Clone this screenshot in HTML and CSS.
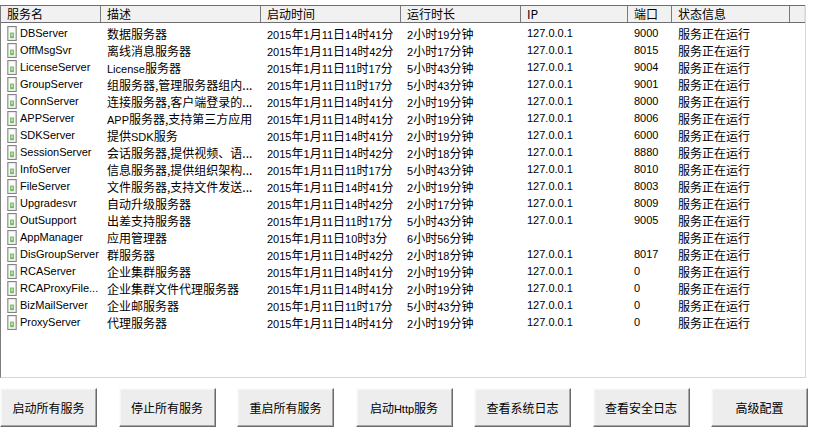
FILE: index.html
```html
<!DOCTYPE html>
<html lang="zh-CN">
<head>
<meta charset="utf-8">
<title>服务管理</title>
<link rel="stylesheet" href="styles.css">
</head>
<body>
<svg class="defs" width="0" height="0" aria-hidden="true">
  <symbol id="ico" viewBox="0 0 10 16">
    <rect x="0.5" y="0.5" width="9" height="15" fill="#e6e6e6" stroke="#7c7c7c"/>
    <rect x="2" y="2" width="6" height="12" fill="#fbfbfb"/>
    <rect x="3" y="7" width="4" height="6" fill="#6cb85a"/>
    <rect x="4" y="8" width="2" height="3" fill="#b9e3a8"/>
  </symbol>
</svg>
<div class="window">
  <div class="list">
    <div class="head">
      <div class="hcell">服务名</div>
      <div class="hcell">描述</div>
      <div class="hcell">启动时间</div>
      <div class="hcell">运行时长</div>
      <div class="hcell">IP</div>
      <div class="hcell">端口</div>
      <div class="hcell">状态信息</div>
      <div class="hcell filler"></div>
    </div>
    <div class="rows">
      <div class="row"><div class="cell name"><svg class="ico"><use href="#ico"/></svg><span class="n">DBServer</span></div><div class="cell">数据服务器</div><div class="cell"><span class="n">2015</span>年<span class="n">1</span>月<span class="n">11</span>日<span class="n">14</span>时<span class="n">41</span>分</div><div class="cell"><span class="n">2</span>小时<span class="n">19</span>分钟</div><div class="cell lat">127.0.0.1</div><div class="cell lat">9000</div><div class="cell">服务正在运行</div></div>
      <div class="row"><div class="cell name"><svg class="ico"><use href="#ico"/></svg><span class="n">OffMsgSvr</span></div><div class="cell">离线消息服务器</div><div class="cell"><span class="n">2015</span>年<span class="n">1</span>月<span class="n">11</span>日<span class="n">14</span>时<span class="n">42</span>分</div><div class="cell"><span class="n">2</span>小时<span class="n">17</span>分钟</div><div class="cell lat">127.0.0.1</div><div class="cell lat">8015</div><div class="cell">服务正在运行</div></div>
      <div class="row"><div class="cell name"><svg class="ico"><use href="#ico"/></svg><span class="n">LicenseServer</span></div><div class="cell"><span class="n">License</span>服务器</div><div class="cell"><span class="n">2015</span>年<span class="n">1</span>月<span class="n">11</span>日<span class="n">11</span>时<span class="n">17</span>分</div><div class="cell"><span class="n">5</span>小时<span class="n">43</span>分钟</div><div class="cell lat">127.0.0.1</div><div class="cell lat">9004</div><div class="cell">服务正在运行</div></div>
      <div class="row"><div class="cell name"><svg class="ico"><use href="#ico"/></svg><span class="n">GroupServer</span></div><div class="cell">组服务器,管理服务器组内...</div><div class="cell"><span class="n">2015</span>年<span class="n">1</span>月<span class="n">11</span>日<span class="n">11</span>时<span class="n">17</span>分</div><div class="cell"><span class="n">5</span>小时<span class="n">43</span>分钟</div><div class="cell lat">127.0.0.1</div><div class="cell lat">9001</div><div class="cell">服务正在运行</div></div>
      <div class="row"><div class="cell name"><svg class="ico"><use href="#ico"/></svg><span class="n">ConnServer</span></div><div class="cell">连接服务器,客户端登录的...</div><div class="cell"><span class="n">2015</span>年<span class="n">1</span>月<span class="n">11</span>日<span class="n">14</span>时<span class="n">41</span>分</div><div class="cell"><span class="n">2</span>小时<span class="n">19</span>分钟</div><div class="cell lat">127.0.0.1</div><div class="cell lat">8000</div><div class="cell">服务正在运行</div></div>
      <div class="row"><div class="cell name"><svg class="ico"><use href="#ico"/></svg><span class="n">APPServer</span></div><div class="cell"><span class="n">APP</span>服务器,支持第三方应用</div><div class="cell"><span class="n">2015</span>年<span class="n">1</span>月<span class="n">11</span>日<span class="n">14</span>时<span class="n">41</span>分</div><div class="cell"><span class="n">2</span>小时<span class="n">19</span>分钟</div><div class="cell lat">127.0.0.1</div><div class="cell lat">8006</div><div class="cell">服务正在运行</div></div>
      <div class="row"><div class="cell name"><svg class="ico"><use href="#ico"/></svg><span class="n">SDKServer</span></div><div class="cell">提供<span class="n">SDK</span>服务</div><div class="cell"><span class="n">2015</span>年<span class="n">1</span>月<span class="n">11</span>日<span class="n">14</span>时<span class="n">41</span>分</div><div class="cell"><span class="n">2</span>小时<span class="n">19</span>分钟</div><div class="cell lat">127.0.0.1</div><div class="cell lat">6000</div><div class="cell">服务正在运行</div></div>
      <div class="row"><div class="cell name"><svg class="ico"><use href="#ico"/></svg><span class="n">SessionServer</span></div><div class="cell">会话服务器,提供视频、语...</div><div class="cell"><span class="n">2015</span>年<span class="n">1</span>月<span class="n">11</span>日<span class="n">14</span>时<span class="n">42</span>分</div><div class="cell"><span class="n">2</span>小时<span class="n">18</span>分钟</div><div class="cell lat">127.0.0.1</div><div class="cell lat">8880</div><div class="cell">服务正在运行</div></div>
      <div class="row"><div class="cell name"><svg class="ico"><use href="#ico"/></svg><span class="n">InfoServer</span></div><div class="cell">信息服务器,提供组织架构...</div><div class="cell"><span class="n">2015</span>年<span class="n">1</span>月<span class="n">11</span>日<span class="n">11</span>时<span class="n">17</span>分</div><div class="cell"><span class="n">5</span>小时<span class="n">43</span>分钟</div><div class="cell lat">127.0.0.1</div><div class="cell lat">8010</div><div class="cell">服务正在运行</div></div>
      <div class="row"><div class="cell name"><svg class="ico"><use href="#ico"/></svg><span class="n">FileServer</span></div><div class="cell">文件服务器,支持文件发送...</div><div class="cell"><span class="n">2015</span>年<span class="n">1</span>月<span class="n">11</span>日<span class="n">14</span>时<span class="n">41</span>分</div><div class="cell"><span class="n">2</span>小时<span class="n">19</span>分钟</div><div class="cell lat">127.0.0.1</div><div class="cell lat">8003</div><div class="cell">服务正在运行</div></div>
      <div class="row"><div class="cell name"><svg class="ico"><use href="#ico"/></svg><span class="n">Upgradesvr</span></div><div class="cell">自动升级服务器</div><div class="cell"><span class="n">2015</span>年<span class="n">1</span>月<span class="n">11</span>日<span class="n">14</span>时<span class="n">42</span>分</div><div class="cell"><span class="n">2</span>小时<span class="n">17</span>分钟</div><div class="cell lat">127.0.0.1</div><div class="cell lat">8009</div><div class="cell">服务正在运行</div></div>
      <div class="row"><div class="cell name"><svg class="ico"><use href="#ico"/></svg><span class="n">OutSupport</span></div><div class="cell">出差支持服务器</div><div class="cell"><span class="n">2015</span>年<span class="n">1</span>月<span class="n">11</span>日<span class="n">11</span>时<span class="n">17</span>分</div><div class="cell"><span class="n">5</span>小时<span class="n">43</span>分钟</div><div class="cell lat">127.0.0.1</div><div class="cell lat">9005</div><div class="cell">服务正在运行</div></div>
      <div class="row"><div class="cell name"><svg class="ico"><use href="#ico"/></svg><span class="n">AppManager</span></div><div class="cell">应用管理器</div><div class="cell"><span class="n">2015</span>年<span class="n">1</span>月<span class="n">11</span>日<span class="n">10</span>时<span class="n">3</span>分</div><div class="cell"><span class="n">6</span>小时<span class="n">56</span>分钟</div><div class="cell lat"></div><div class="cell lat"></div><div class="cell">服务正在运行</div></div>
      <div class="row"><div class="cell name"><svg class="ico"><use href="#ico"/></svg><span class="n">DisGroupServer</span></div><div class="cell">群服务器</div><div class="cell"><span class="n">2015</span>年<span class="n">1</span>月<span class="n">11</span>日<span class="n">14</span>时<span class="n">42</span>分</div><div class="cell"><span class="n">2</span>小时<span class="n">18</span>分钟</div><div class="cell lat">127.0.0.1</div><div class="cell lat">8017</div><div class="cell">服务正在运行</div></div>
      <div class="row"><div class="cell name"><svg class="ico"><use href="#ico"/></svg><span class="n">RCAServer</span></div><div class="cell">企业集群服务器</div><div class="cell"><span class="n">2015</span>年<span class="n">1</span>月<span class="n">11</span>日<span class="n">14</span>时<span class="n">41</span>分</div><div class="cell"><span class="n">2</span>小时<span class="n">19</span>分钟</div><div class="cell lat">127.0.0.1</div><div class="cell lat">0</div><div class="cell">服务正在运行</div></div>
      <div class="row"><div class="cell name"><svg class="ico"><use href="#ico"/></svg><span class="n">RCAProxyFile...</span></div><div class="cell">企业集群文件代理服务器</div><div class="cell"><span class="n">2015</span>年<span class="n">1</span>月<span class="n">11</span>日<span class="n">14</span>时<span class="n">41</span>分</div><div class="cell"><span class="n">2</span>小时<span class="n">19</span>分钟</div><div class="cell lat">127.0.0.1</div><div class="cell lat">0</div><div class="cell">服务正在运行</div></div>
      <div class="row"><div class="cell name"><svg class="ico"><use href="#ico"/></svg><span class="n">BizMailServer</span></div><div class="cell">企业邮服务器</div><div class="cell"><span class="n">2015</span>年<span class="n">1</span>月<span class="n">11</span>日<span class="n">11</span>时<span class="n">17</span>分</div><div class="cell"><span class="n">5</span>小时<span class="n">43</span>分钟</div><div class="cell lat">127.0.0.1</div><div class="cell lat">0</div><div class="cell">服务正在运行</div></div>
      <div class="row"><div class="cell name"><svg class="ico"><use href="#ico"/></svg><span class="n">ProxyServer</span></div><div class="cell">代理服务器</div><div class="cell"><span class="n">2015</span>年<span class="n">1</span>月<span class="n">11</span>日<span class="n">14</span>时<span class="n">41</span>分</div><div class="cell"><span class="n">2</span>小时<span class="n">19</span>分钟</div><div class="cell lat">127.0.0.1</div><div class="cell lat">0</div><div class="cell">服务正在运行</div></div>
    </div>
  </div>
  <div class="buttons">
    <button class="btn">启动所有服务</button>
    <button class="btn">停止所有服务</button>
    <button class="btn">重启所有服务</button>
    <button class="btn">启动<span class="n">Http</span>服务</button>
    <button class="btn">查看系统日志</button>
    <button class="btn">查看安全日志</button>
    <button class="btn">高级配置</button>
  </div>
</div>
</body>
</html>
```
FILE: styles.css
```css
html, body {
  margin: 0;
  padding: 0;
  background: #ffffff;
}

body {
  font-family: "Noto Sans CJK SC", "Liberation Sans", sans-serif;
  font-size: 12px;
  color: #000000;
}

.defs {
  position: absolute;
  width: 0;
  height: 0;
  overflow: hidden;
}

.window {
  width: 819px;
  height: 438px;
  box-sizing: border-box;
  padding-top: 5px;
  display: flex;
  flex-direction: column;
}

.list {
  width: 806px;
  height: 373px;
  box-sizing: border-box;
  border-left: 1px solid #7c7c7c;
  border-right: 1px solid #d6d6d6;
  border-bottom: 1px solid #d6d6d6;
  display: flex;
  flex-direction: column;
  overflow: hidden;
  background: #ffffff;
}

.head,
.row {
  display: grid;
  grid-template-columns: 100px 160px 140px 120px 107px 44px 118px 1fr;
}

.head {
  height: 18px;
  box-sizing: border-box;
  border-top: 1px solid #6e6e6e;
  border-bottom: 1px solid #6e6e6e;
  background: #f1f1f1;
}

.hcell {
  box-sizing: border-box;
  border-right: 1px solid #7a7a7a;
  padding-left: 6px;
  line-height: 16px;
  white-space: nowrap;
  overflow: hidden;
}

.hcell.filler {
  border-right: 1px solid #e2e2e2;
}

.rows {
  padding-top: 2px;
}

.row {
  height: 17px;
}

.cell {
  padding-left: 6px;
  line-height: 17px;
  white-space: nowrap;
  overflow: hidden;
}

.cell.name {
  display: flex;
  align-items: center;
  gap: 3px;
}

.n,
.cell.lat {
  font-family: "Liberation Sans", "Noto Sans CJK SC", sans-serif;
  font-size: 11px;
}

.ico {
  width: 10px;
  height: 15px;
  flex: none;
}

.buttons {
  width: 808px;
  margin-top: 10px;
  display: flex;
  justify-content: space-between;
}

.btn {
  width: 97px;
  height: 39px;
  padding: 0;
  box-sizing: border-box;
  font-family: "Noto Sans CJK SC", "Liberation Sans", sans-serif;
  font-size: 12px;
  color: #000000;
  background: #ededed;
  border: 1px solid;
  border-color: #fbfbfb #6a6a6a #6a6a6a #fbfbfb;
  box-shadow: inset -1px -1px 0 #a8a8a8, inset 1px 1px 0 #f6f6f6;
}
```
